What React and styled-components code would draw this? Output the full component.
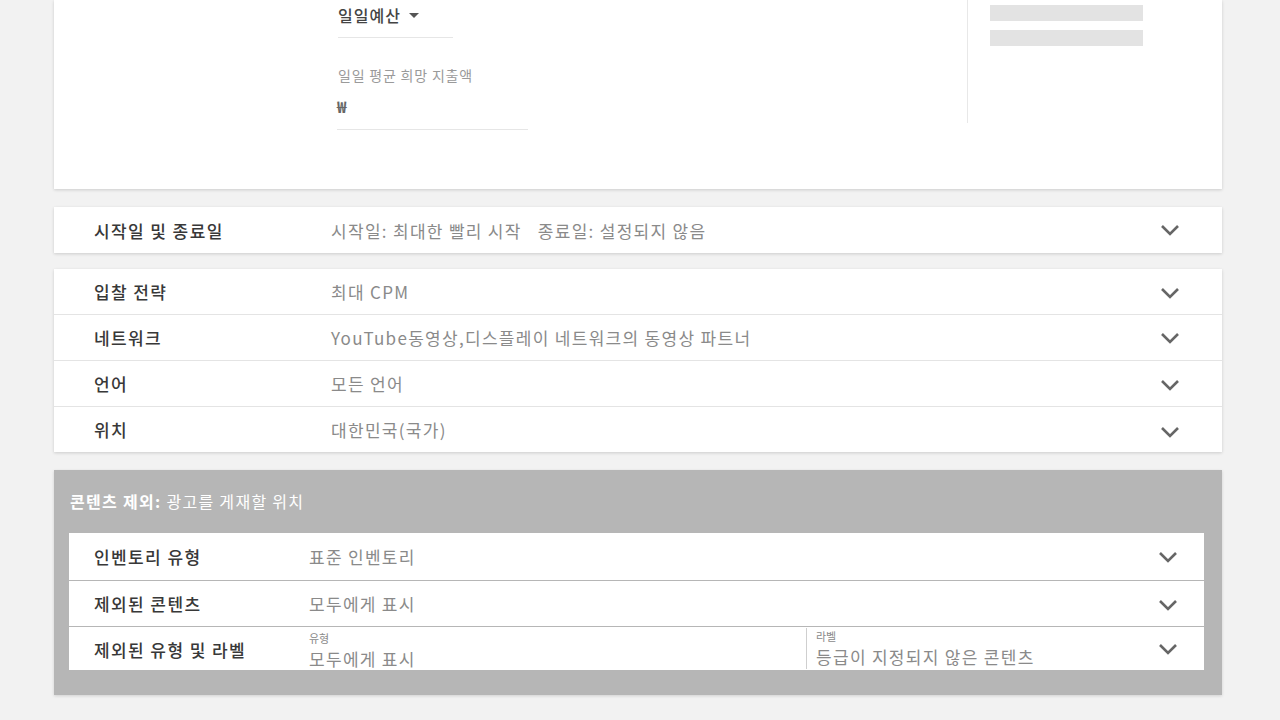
import React from "react";
import styled, { createGlobalStyle } from "styled-components";

const Global = createGlobalStyle`
  html, body { margin: 0; padding: 0; background: #f2f2f2; }
  body { font-family: "Noto Sans CJK KR", "Noto Sans", sans-serif; }
  * { box-sizing: border-box; }
`;

const Page = styled.div`
  width: 1280px;
  height: 720px;
  overflow: hidden;
  padding: 0 58px 0 54px;
  display: flex;
  flex-direction: column;
`;

const Card = styled.div`
  background: #fff;
  box-shadow: 0 1px 3px rgba(0, 0, 0, 0.16);
  margin-bottom: ${(p) => p.$mb || 0}px;
`;

const BudgetCard = styled(Card)`
  height: 189px;
  display: grid;
  grid-template-columns: 283px 630px 1fr;
`;

const BudgetFields = styled.div`
  grid-column: 2;
  display: flex;
  flex-direction: column;
`;

const BudgetSelect = styled.div`
  width: 115px;
  height: 38px;
  border-bottom: 1px solid #e6e6e6;
  display: flex;
  align-items: flex-start;
  gap: 8px;
  padding-top: 3px;
  font-size: 16px;
  font-weight: 500;
  letter-spacing: 1px;
  color: #444;
  margin-left: 1px;
`;

const Caret = styled.span`
  width: 0;
  height: 0;
  border-left: 5px solid transparent;
  border-right: 5px solid transparent;
  border-top: 5px solid #555;
  margin-top: 10px;
`;

const FieldLabel = styled.div`
  margin-top: 27px;
  font-size: 14px;
  letter-spacing: 0.8px;
  color: #9a9a9a;
  margin-left: 1px;
`;

const AmountInput = styled.div`
  width: 191px;
  height: 45px;
  border-bottom: 1px solid #e6e6e6;
  font-size: 16px;
  font-weight: 700;
  color: #666;
  padding-top: 9px;
`;

const SidePanel = styled.div`
  grid-column: 3;
  height: 123px;
  border-left: 1px solid #e8e8e8;
  padding: 5px 0 0 22px;
  display: flex;
  flex-direction: column;
  gap: 9px;
`;

const Skeleton = styled.div`
  width: 153px;
  height: 16px;
  background: #e3e3e3;
`;

const Row = styled.div`
  display: grid;
  grid-template-columns: ${(p) => p.$cols || "237px 1fr 104px"};
  align-items: center;
  height: ${(p) => p.$h || 46}px;
  padding-left: ${(p) => p.$pl || 40}px;
  border-top: ${(p) => (p.$first ? "none" : "1px solid #e4e4e4")};
  background: #fff;
`;

const Title = styled.div`
  font-size: 17px;
  font-weight: 500;
  letter-spacing: 1.4px;
  color: #383838;
  white-space: nowrap;
`;

const Value = styled.div`
  font-size: 17px;
  letter-spacing: 1.3px;
  color: #8a8a8a;
  white-space: nowrap;
  display: flex;
  gap: ${(p) => p.$gap || 0}px;
`;

const ChevronBox = styled.div`
  display: flex;
  justify-content: center;
  align-items: center;
  padding-top: ${(p) => p.$dy || 0}px;
`;

const Chevron = ({ dy }) => (
  <ChevronBox $dy={dy}>
    <svg width="20" height="12" viewBox="0 0 20 12">
      <path d="M2 2 L10 10 L18 2" fill="none" stroke="#666" strokeWidth="2.6" />
    </svg>
  </ChevronBox>
);

const Exclusion = styled.div`
  margin-top: 18px;
  height: 225px;
  background: #b6b6b6;
  box-shadow: 0 1px 3px rgba(0, 0, 0, 0.14);
  padding: 0 18px 0 15px;
  display: flex;
  flex-direction: column;
`;

const ExHeader = styled.div`
  height: 63px;
  display: flex;
  align-items: center;
  padding-left: 1px;
  padding-bottom: 2px;
  font-size: 16px;
  letter-spacing: 1.3px;
  color: #fff;
  white-space: pre;
  b { font-weight: 700; }
`;

const ExList = styled.div`
  display: flex;
  flex-direction: column;
  gap: 1px;
  background: #b6b6b6;
`;

const Split = styled.div`
  display: grid;
  grid-template-columns: 497px 1fr;
  align-items: end;
  padding-top: 1px;
`;

const SubCol = styled.div`
  display: flex;
  flex-direction: column;
  ${(p) =>
    p.$divided &&
    `border-left: 1px solid #cfcfcf; padding-left: 9px; margin-bottom: 2px;`}
`;

const SubLabel = styled.div`
  font-size: 11px;
  line-height: normal;
  color: #8a8a8a;
`;

const SubValue = styled.div`
  font-size: 17px;
  line-height: normal;
  letter-spacing: 1.3px;
  color: #8a8a8a;
  white-space: nowrap;
`;

const settings = [
  { t: "입찰 전략", v: "최대 CPM", dy: 2 },
  { t: "네트워크", v: "YouTube동영상,디스플레이 네트워크의 동영상 파트너", dy: -2 },
  { t: "언어", v: "모든 언어", dy: 2 },
  { t: "위치", v: "대한민국(국가)", dy: 4 },
];

export default function App() {
  return (
    <>
      <Global />
      <Page>
        <BudgetCard $mb={18}>
          <BudgetFields>
            <BudgetSelect>
              일일예산 <Caret />
            </BudgetSelect>
            <FieldLabel>일일 평균 희망 지출액</FieldLabel>
            <AmountInput>₩</AmountInput>
          </BudgetFields>
          <SidePanel>
            <Skeleton />
            <Skeleton />
          </SidePanel>
        </BudgetCard>

        <Card $mb={16}>
          <Row $first>
            <Title>시작일 및 종료일</Title>
            <Value $gap={16}>
              <span>시작일: 최대한 빨리 시작</span>
              <span>종료일: 설정되지 않음</span>
            </Value>
            <Chevron />
          </Row>
        </Card>

        <Card>
          {settings.map((s, i) => (
            <Row key={s.t} $first={i === 0} $h={i === 0 ? 45 : 46}>
              <Title>{s.t}</Title>
              <Value>{s.v}</Value>
              <Chevron dy={s.dy} />
            </Row>
          ))}
        </Card>

        <Exclusion>
          <ExHeader>
            <b>콘텐츠 제외:</b> 광고를 게재할 위치
          </ExHeader>
          <ExList>
            <Row $first $h={47} $pl={25} $cols="215px 1fr 72px">
              <Title>인벤토리 유형</Title>
              <Value>표준 인벤토리</Value>
              <Chevron dy={-2} />
            </Row>
            <Row $first $h={45} $pl={25} $cols="215px 1fr 72px">
              <Title>제외된 콘텐츠</Title>
              <Value>모두에게 표시</Value>
              <Chevron dy={2} />
            </Row>
            <Row $first $h={43} $pl={25} $cols="215px 1fr 72px">
              <Title>제외된 유형 및 라벨</Title>
              <Split>
                <SubCol>
                  <SubLabel>유형</SubLabel>
                  <SubValue>모두에게 표시</SubValue>
                </SubCol>
                <SubCol $divided>
                  <SubLabel>라벨</SubLabel>
                  <SubValue>등급이 지정되지 않은 콘텐츠</SubValue>
                </SubCol>
              </Split>
              <Chevron dy={-4} />
            </Row>
          </ExList>
        </Exclusion>
      </Page>
    </>
  );
}
